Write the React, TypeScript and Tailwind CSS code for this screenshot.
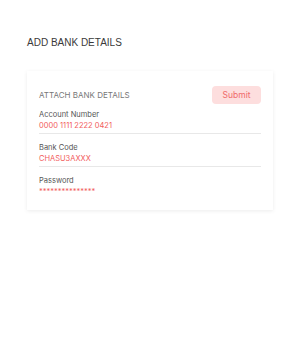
export default function App() {
  const fields = [
    { label: "Account Number", value: "0000 1111 2222 0421" },
    { label: "Bank Code", value: "CHASU3AXXX" },
  ];
  return (
    <div className="min-h-[338px] w-[300px] bg-white pl-[27px] pt-[37px]" style={{ fontFamily: "Inter, 'Liberation Sans', sans-serif" }}>
      <div className="text-[10px] leading-[12px] text-[#3a3a3a]" style={{ fontFamily: "'Liberation Sans', Arial, sans-serif" }}>
        ADD BANK DETAILS
      </div>
      <div className="mt-[22px] w-[246px] bg-white px-[12px] pt-[15px] pb-[13px] shadow-[0_1px_4px_rgba(0,0,0,0.08)]">
        <div className="flex items-center justify-between">
          <div className="text-[8px] leading-[10px] text-[#777]">ATTACH BANK DETAILS</div>
          <button className="h-[18px] w-[49px] rounded-[4px] bg-[#fddede] text-[8.5px] text-[#f06a6a]">Submit</button>
        </div>
        <div className="mt-[6px] flex flex-col gap-[9px]">
          {fields.map((f) => (
            <div key={f.label} className="border-b border-[#e8e8e8] pb-[2px]">
              <div className="text-[7.5px] leading-[10px] text-[#555]">{f.label}</div>
              <div className="mt-[1px] text-[7.5px] leading-[10px] text-[#f25c5c]">{f.value}</div>
            </div>
          ))}
          <div>
            <div className="text-[7.5px] leading-[10px] text-[#555]">Password</div>
            <div className="mt-[1px] text-[7.5px] leading-[10px] text-[#f25c5c]">***************</div>
          </div>
        </div>
      </div>
    </div>
  );
}
